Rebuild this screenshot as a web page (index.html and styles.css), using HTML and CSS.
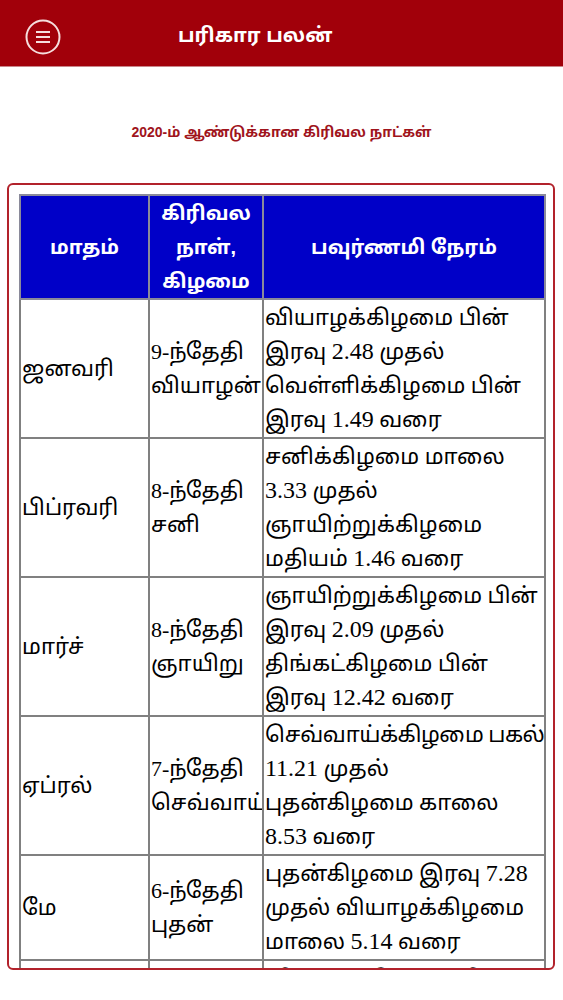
FILE: index.html
```html
<!DOCTYPE html>
<html lang="ta">
<head>
<meta charset="utf-8">
<title>பரிகார பலன்</title>
<link rel="stylesheet" href="styles.css">
</head>
<body>
<header class="topbar">
  <button class="menu-btn" aria-label="menu">
    <svg width="36" height="36" viewBox="0 0 36 36">
      <circle cx="18" cy="18" r="16.5" fill="none" stroke="#f6dede" stroke-width="2"/>
      <line x1="11" y1="13" x2="25" y2="13" stroke="#f6dede" stroke-width="2"/>
      <line x1="11" y1="18" x2="25" y2="18" stroke="#f6dede" stroke-width="2"/>
      <line x1="11" y1="23" x2="25" y2="23" stroke="#f6dede" stroke-width="2"/>
    </svg>
  </button>
  <h1 class="title">பரிகார பலன்</h1>
</header>
<h2 class="subtitle">2020-ம் ஆண்டுக்கான கிரிவல நாட்கள்</h2>
<div class="panel">
  <table class="girivalam">
    <colgroup>
      <col class="c1"><col class="c2"><col class="c3">
    </colgroup>
    <thead>
      <tr>
        <th>மாதம்</th>
        <th>கிரிவல<br>நாள்,<br>கிழமை</th>
        <th>பவுர்ணமி நேரம்</th>
      </tr>
    </thead>
    <tbody>
      <tr>
        <td>ஜனவரி</td>
        <td>9-ந்தேதி<br>வியாழன்</td>
        <td>வியாழக்கிழமை பின்<br>இரவு <span class="num">2.48</span> முதல்<br>வெள்ளிக்கிழமை பின்<br>இரவு <span class="num">1.49</span> வரை</td>
      </tr>
      <tr>
        <td>பிப்ரவரி</td>
        <td>8-ந்தேதி<br>சனி</td>
        <td>சனிக்கிழமை மாலை<br><span class="num">3.33</span> முதல்<br>ஞாயிற்றுக்கிழமை<br>மதியம் <span class="num">1.46</span> வரை</td>
      </tr>
      <tr>
        <td>மார்ச்</td>
        <td>8-ந்தேதி<br>ஞாயிறு</td>
        <td>ஞாயிற்றுக்கிழமை பின்<br>இரவு <span class="num">2.09</span> முதல்<br>திங்கட்கிழமை பின்<br>இரவு <span class="num">12.42</span> வரை</td>
      </tr>
      <tr>
        <td>ஏப்ரல்</td>
        <td>7-ந்தேதி<br>செவ்வாய்</td>
        <td><span class="tight">செவ்வாய்க்கிழமை பகல்</span><br><span class="num">11.21</span> முதல்<br>புதன்கிழமை காலை<br><span class="num">8.53</span> வரை</td>
      </tr>
      <tr>
        <td>மே</td>
        <td>6-ந்தேதி<br>புதன்</td>
        <td>புதன்கிழமை இரவு <span class="num">7.28</span><br>முதல் வியாழக்கிழமை<br>மாலை <span class="num">5.14</span> வரை</td>
      </tr>
      <tr>
        <td>ஜூன்</td>
        <td>5-ந்தேதி<br>வெள்ளி</td>
        <td>வியாழக்கிழமை பின்<br>இரவு <span class="num">3.16</span> முதல்<br>வெள்ளிக்கிழமை<br>இரவு <span class="num">12.41</span> வரை</td>
      </tr>
    </tbody>
  </table>
</div>
</body>
</html>
```

FILE: styles.css
```css
html, body {
  margin: 0;
  padding: 0;
  background: #ffffff;
}
body {
  font-family: "Liberation Serif", "Noto Sans Tamil", serif;
}
.topbar {
  height: 66px;
  background: #a1000a;
  border-bottom: 1px solid #c9868a;
  display: flex;
  align-items: center;
  padding-left: 25px;
}
.menu-btn {
  background: none;
  border: 0;
  padding: 0;
  width: 36px;
  height: 36px;
  display: flex;
  margin-top: 8px;
}
.title {
  margin: 3px 0 0 117px;
  color: #ffffff;
  font-family: "Liberation Sans", "Noto Sans Tamil", sans-serif;
  font-size: 20px;
  font-weight: bold;
  line-height: 1;
}
.subtitle {
  margin: 0;
  padding: 54px 0 0;
  height: 66px;
  box-sizing: border-box;
  text-align: center;
  color: #a0141c;
  font-family: "Liberation Sans", "Noto Sans Tamil", sans-serif;
  font-size: 14px;
  font-weight: bold;
  line-height: 22px;
}
.panel {
  margin: 50px 0 0 7px;
  width: 548px;
  height: 787px;
  box-sizing: border-box;
  border: 2px solid #b2222b;
  border-radius: 6px;
  padding: 9px 10px 0 10px;
  overflow: hidden;
}
.girivalam {
  width: 525px;
  border-collapse: collapse;
  table-layout: fixed;
  border: 2px solid #9a9a9a;
}
.c1 { width: 129px; }
.c2 { width: 114px; }
.c3 { width: 282px; }
.girivalam th {
  background: #0000c8;
  color: #ffffff;
  font-family: "Liberation Sans", "Noto Sans Tamil", sans-serif;
  font-size: 20px;
  font-weight: bold;
  line-height: 34px;
  padding: 0 2px;
  border: 2px solid #8a8a9a;
  text-align: center;
  vertical-align: middle;
}
.girivalam td {
  border: 2px solid #808080;
  padding: 1px 1px 0;
  font-size: 22px;
  line-height: 34px;
  color: #000000;
  text-align: left;
  vertical-align: middle;
  white-space: nowrap;
  overflow: hidden;
}
.num {
  font-size: 24px;
  line-height: 1;
}
.tight {
  letter-spacing: -0.5px;
}
```
